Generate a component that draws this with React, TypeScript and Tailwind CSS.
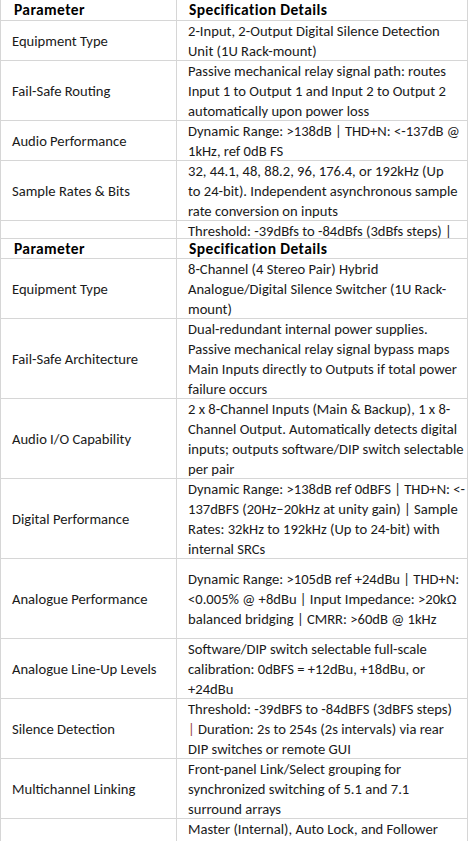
import React from 'react'

interface ISpecRow {
  label: string
  lines: React.ReactNode[]
  height: string
  top?: boolean
}

const firstTable: ISpecRow[] = [
  {
    label: 'Equipment Type',
    lines: ['2-Input, 2-Output Digital Silence Detection', 'Unit (1U Rack-mount)'],
    height: 'h-[40px]',
  },
  {
    label: 'Fail-Safe Routing',
    lines: [
      'Passive mechanical relay signal path: routes',
      'Input 1 to Output 1 and Input 2 to Output 2',
      'automatically upon power loss',
    ],
    height: 'h-[60px]',
  },
  {
    label: 'Audio Performance',
    lines: ['Dynamic Range: >138dB | THD+N: <-137dB @', '1kHz, ref 0dB FS'],
    height: 'h-[40px]',
  },
  {
    label: 'Sample Rates & Bits',
    lines: [
      '32, 44.1, 48, 88.2, 96, 176.4, or 192kHz (Up',
      'to 24-bit). Independent asynchronous sample',
      'rate conversion on inputs',
    ],
    height: 'h-[60px]',
  },
  {
    label: 'Silence Detection',
    lines: [
      'Threshold: -39dBfs to -84dBfs (3dBfs steps) |',
      'Duration: 2s to 254s (2s intervals) via rear',
      'DIP switches or remote GUI',
    ],
    height: 'h-[60px]',
    top: true,
  },
]

const secondTable: ISpecRow[] = [
  {
    label: 'Equipment Type',
    lines: ['8-Channel (4 Stereo Pair) Hybrid', 'Analogue/Digital Silence Switcher (1U Rack-', 'mount)'],
    height: 'h-[60px]',
  },
  {
    label: 'Fail-Safe Architecture',
    lines: [
      'Dual-redundant internal power supplies.',
      'Passive mechanical relay signal bypass maps',
      'Main Inputs directly to Outputs if total power',
      'failure occurs',
    ],
    height: 'h-[80px]',
  },
  {
    label: 'Audio I/O Capability',
    lines: [
      '2 x 8-Channel Inputs (Main & Backup), 1 x 8-',
      'Channel Output. Automatically detects digital',
      'inputs; outputs software/DIP switch selectable',
      'per pair',
    ],
    height: 'h-[80px]',
  },
  {
    label: 'Digital Performance',
    lines: [
      'Dynamic Range: >138dB ref 0dBFS | THD+N: <-',
      '137dBFS (20Hz–20kHz at unity gain) | Sample',
      'Rates: 32kHz to 192kHz (Up to 24-bit) with',
      'internal SRCs',
    ],
    height: 'h-[80px]',
  },
  {
    label: 'Analogue Performance',
    lines: [
      'Dynamic Range: >105dB ref +24dBu | THD+N:',
      '<0.005% @ +8dBu | Input Impedance: >20kΩ',
      'balanced bridging | CMRR: >60dB @ 1kHz',
    ],
    height: 'h-[80px]',
  },
  {
    label: 'Analogue Line-Up Levels',
    lines: ['Software/DIP switch selectable full-scale', 'calibration: 0dBFS = +12dBu, +18dBu, or', '+24dBu'],
    height: 'h-[60px]',
  },
  {
    label: 'Silence Detection',
    lines: [
      'Threshold: -39dBFS to -84dBFS (3dBFS steps)',
      <>
        <span className="text-[#9a3b3b]">|</span> Duration: 2s to 254s (2s intervals) via rear
      </>,
      'DIP switches or remote GUI',
    ],
    height: 'h-[60px]',
  },
  {
    label: 'Multichannel Linking',
    lines: ['Front-panel Link/Select grouping for', 'synchronized switching of 5.1 and 7.1', 'surround arrays'],
    height: 'h-[60px]',
  },
  {
    label: 'Clock Sync Modes',
    lines: [
      'Master (Internal), Auto Lock, and Follower',
      'modes with automatic reference switching',
      'for redundant clock distribution',
    ],
    height: 'h-[60px]',
    top: true,
  },
]

const HeaderRow: React.FC<{ bordered?: boolean }> = ({ bordered }) => {
  return (
    <div
      className={`grid h-[21px] grid-cols-[176px_1fr] border-b border-[#d6d6d6] text-[15.5px] font-bold tracking-[0.4px] text-black ${
        bordered ? 'border-t' : ''
      }`}
    >
      <div className="flex items-center border-r border-[#d6d6d6] pl-[13px]">Parameter</div>
      <div className="flex items-center pl-[12px]">Specification Details</div>
    </div>
  )
}

const SpecRow: React.FC<{ row: ISpecRow }> = ({ row }) => {
  return (
    <div className={`grid grid-cols-[176px_1fr] border-b border-[#d6d6d6] ${row.height}`}>
      <div className="flex items-center border-r border-[#d6d6d6] pl-[11px] whitespace-nowrap">{row.label}</div>
      <div className={`flex flex-col pl-[11px] ${row.top ? 'justify-start' : 'justify-center'}`}>
        {row.lines.map((line, i) => (
          <div className="h-[20px] shrink-0 whitespace-nowrap" key={i}>
            {line}
          </div>
        ))}
      </div>
    </div>
  )
}

const SpecTable: React.FC<{ rows: ISpecRow[]; bordered?: boolean }> = ({ rows, bordered }) => {
  return (
    <div className="border-x border-[#d6d6d6]">
      <HeaderRow bordered={bordered} />
      {rows.map((row) => (
        <SpecRow row={row} key={row.label + row.height} />
      ))}
    </div>
  )
}

export default function App() {
  return (
    <div
      className="h-[841px] w-[469px] overflow-hidden bg-white text-[14.6px] leading-[20px] text-[#1a1a1a]"
      style={{ fontFamily: 'Carlito, Calibri, Lato, "Open Sans", sans-serif' }}
    >
      <div className="w-[468px]">
        <div className="h-[238px] overflow-hidden">
          <SpecTable rows={firstTable} />
        </div>
        <SpecTable rows={secondTable} bordered />
      </div>
    </div>
  )
}
